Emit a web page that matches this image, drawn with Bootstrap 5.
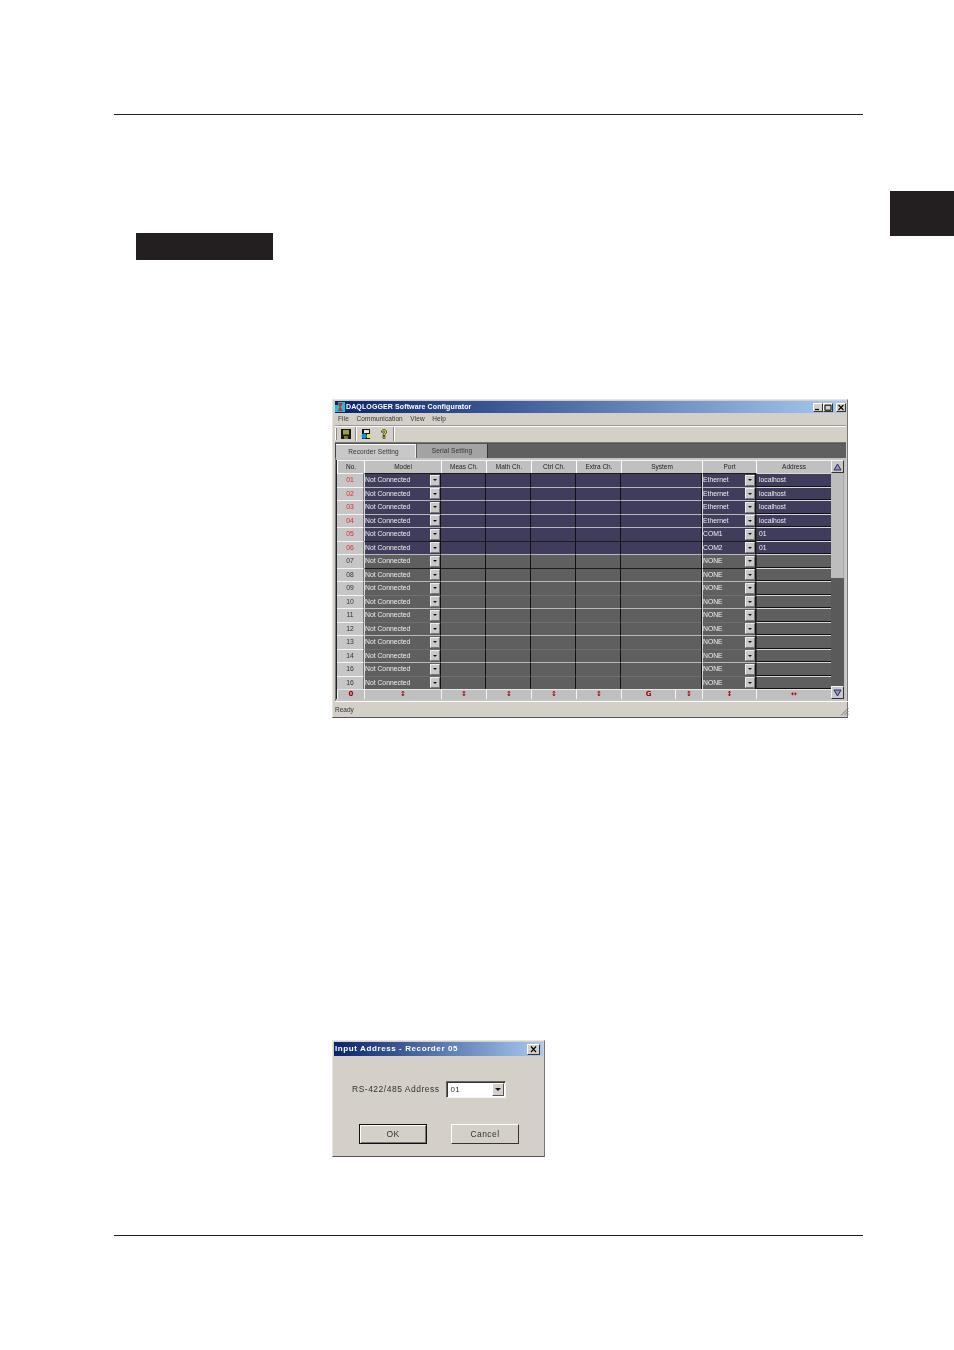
<!DOCTYPE html>
<html lang="en">
<head>
<meta charset="utf-8">
<title>DAQLOGGER Software Configurator</title>
<link href="https://cdn.jsdelivr.net/npm/bootstrap@5.3.0/dist/css/bootstrap.min.css" rel="stylesheet">
<style>
html,body{background:#fff;margin:0;height:1350px;overflow:hidden}
.sheet{font-family:"Liberation Sans",Arial,sans-serif;width:954px}
.rule{height:1px;background:#231f20;width:749px;margin-left:114px}
.rule-top{margin-top:114px}
.rule-bottom{margin-top:78px}
.heading-band{margin-top:76px;height:69px}
.heading-block{width:137px;height:27px;margin-left:136px;margin-top:42px;background:#231f20}
.chapter-tab{width:64px;height:45px;background:#231f20}
.winframe{background:#d4d0c8;border:1px solid;border-color:#e8e6e0 #777 #555 #e8e6e0;color:#222;filter:blur(.4px);font-size:6.8px}
.app-win{width:516px;height:319px;margin:139px 0 0 332px;padding:1px 1px 0 2px}
.titlebar{height:12px;background:linear-gradient(90deg,#0a246a,#a6caf0);color:#fff;font-weight:700;font-size:7px;letter-spacing:.12px;padding:0}
.app-ico{width:10px;height:10px;margin-right:1px;flex:none}
.capbtn{width:10px;height:9px;background:#d4d0c8;border:1px solid;border-color:#fff #333 #333 #fff;display:block;flex:none}
.capbtn svg{display:block;width:8px;height:7px}
.cap-x{margin-left:3px}
.menubar{height:12px;padding-left:3px;line-height:12px;color:#333;font-size:6.5px;letter-spacing:.1px}
.menubar span{margin-right:7.5px}
.toolbar{height:18px;border-top:1px solid #9a9890;border-bottom:1px solid #77756f;box-shadow:inset 0 1px #fff;padding-left:0}
.tb-grip{width:2px;height:12px;border-left:1px solid #fff;border-right:1px solid #888}
.tb-ico{width:10px;height:10px;flex:none}
.tb-sep{width:2px;height:14px;border-left:1px solid #888;border-right:1px solid #fff}
.tabstrip{height:15px;background:#5f5f5f;width:511px;border-left:1px solid #444;border-top:1px solid #555}
.tabitem{height:14px;line-height:14px;text-align:center;color:#333;font-size:6.5px;letter-spacing:.12px}
.tab-on{width:80px;background:#c8c8c8;border-top:1px solid #fff;border-right:1px solid #eee;margin-right:1px;padding-right:4px}
.tab-off{width:71px;background:#a3a3a3;border-right:1px solid #333}
.panelbody{width:511px;background:#c4c4c4;padding:2px 2px 2px 1px;border-left:1px solid #777}
.gridbox{width:494px;flex:none;box-shadow:-1px 0 #222}
.cfg-row,.cfg-head{display:grid;grid-template-columns:27px 77px 45px 45px 45px 45px 81px 54px 75px}
.cfg-head{height:13px;background:#c0c0c0;color:#222;text-align:center;line-height:12px;font-size:6.5px}
.cfg-head span{border-left:1px solid #fff;border-top:1px solid #f2f2f2;border-bottom:1px solid #777}
.cfg-row{height:13.53px;line-height:12.5px;color:#eee}
.cfg-row>span{overflow:hidden;white-space:nowrap;border-top:1px solid}
.blue>span{background:#3f3c5c}
.grey>span{background:#5f5f5f}
.lw>span{border-top-color:#b9b9b9}
.ld>span{border-top-color:#1c1c1c}
.lf>span{border-top-color:#6e6e6e}
.cfg-row>.c-no{background:#c6c6c6;color:#333;text-align:center;border-top-color:#f4f4f4;border-right:1px solid #777}
.blue>.c-no{color:#e2282c}
.c-cb{display:flex;align-items:center;border-left:1px solid #ddd;border-right:1px solid #111;padding-left:0}
.c-dat{border-right:1px solid #111}
.cfg-row>.c-addr{border-left:1px solid #333;border-top-color:#d8d8d8;border-bottom:1px solid #111;padding-left:2px;line-height:11px}
.dropbtn{width:10px;height:11px;margin-left:auto;margin-right:0;background:#c8c8c8;border:1px solid;border-color:#eee #777 #777 #eee;display:flex;align-items:center;justify-content:center;flex:none}
.dropbtn::after{content:"";border:2px solid transparent;border-top:2px solid #111;border-bottom:0}
.cfg-foot{display:grid;grid-template-columns:27px 77px 45px 45px 45px 45px 54px 27px 54px 75px;height:10px;background:#bfbfbf;color:#a00000;text-align:center;line-height:8px;font-size:7px;font-weight:700;font-family:"DejaVu Sans",sans-serif}
.cfg-foot span{border-left:1px solid #f4f4f4;border-top:1px solid #e6e6e6;overflow:hidden}
.scrollcol{width:13px;flex:none}
.scrollbtn{height:13px;background:#c8c8c8;border:1px solid;border-color:#f4f4f4 #333 #333 #f4f4f4}
.scrollbtn svg{width:9px;height:8px;display:block}
.scrolllight{height:105px;background:#bdbdbd;border-right:1px solid #aaa}
.scrolldark{background:#5a5a5a}
.statusbar{height:16px;line-height:15px;border-top:1px solid #fff;color:#333;padding:0 0 0 0;font-size:6.5px;width:514px}
.resizer{width:9px;height:9px;margin-top:5px}
.dlg-win{width:213px;height:117px;margin:322px 0 0 332px;padding:1px 1px 0 1px;color:#333;font-size:8px}
.dlg-title{height:14px;background:linear-gradient(90deg,#0a246a,#a6caf0);color:#fff;font-weight:700;font-size:8px;letter-spacing:.6px;padding:0 3px 0 1px}
.dlg-close{width:13px;height:11px;background:#d4d0c8;border:1px solid;border-color:#fff #333 #333 #fff;display:block;flex:none}
.dlg-close svg{display:block;width:11px;height:9px}
.dlg-field{margin:25px 0 0 18px;letter-spacing:.5px;font-size:8.5px}
.dlg-combo{width:60px;height:17px;margin-left:7px;background:#fff;border:1px solid;border-color:#666 #f4f4f4 #f4f4f4 #666;box-shadow:inset 1px 1px #333;padding-left:3px;letter-spacing:.4px;font-size:8px}
.dlg-drop{width:12px;height:13px;margin-left:auto;margin-right:1px;background:#d4d0c8;border:1px solid;border-color:#fff #555 #555 #fff;display:flex;align-items:center;justify-content:center}
.dlg-drop::after{content:"";border:3px solid transparent;border-top:3px solid #111;border-bottom:0}
.dlg-actions{margin:26px 0 0 25px;gap:24px}
.dlg-actions .btn{width:68px;height:20px;padding:0;border-radius:0;background:#d4d0c8;color:#333;font-size:8.5px;line-height:16px;letter-spacing:.4px;border:1px solid;border-color:#fff #333 #333 #fff}
.dlg-actions .btn.dlg-default{border:1px solid #111;box-shadow:inset 1px 1px #fff,inset -1px -1px #777}
</style>
</head>
<body>
<div class="sheet">
  <div class="rule rule-top"></div>
  <div class="heading-band d-flex align-items-start justify-content-between">
    <div class="heading-block"></div>
    <div class="chapter-tab"></div>
  </div>

  <div class="winframe app-win">
    <div class="titlebar d-flex align-items-center">
      <svg class="app-ico" viewBox="0 0 10 10"><rect width="10" height="10" fill="#19c4d0"/><path d="M3 1h5L5.500 5 8 9H3l1.500-4z" fill="#e0202c"/><path d="M0 0h3v3H0z" fill="#0a246a"/></svg>
      <span>DAQLOGGER Software Configurator</span>
      <span class="capbtn ms-auto"><svg viewBox="0 0 8 7"><path d="M1 5.500h4" stroke="#000" stroke-width="1.200"/></svg></span>
      <span class="capbtn"><svg viewBox="0 0 8 7"><path d="M1 1.200h6v5H1z" fill="none" stroke="#000" stroke-width="1"/></svg></span>
      <span class="capbtn cap-x"><svg viewBox="0 0 8 7"><path d="M1.500 1l5 5m0-5l-5 5" stroke="#000" stroke-width="1.100"/></svg></span>
    </div>
    <div class="menubar d-flex"><span>File</span><span>Communication</span><span>View</span><span>Help</span></div>
    <div class="toolbar d-flex align-items-center">
      <span class="tb-grip me-1"></span>
      <svg class="tb-ico" viewBox="0 0 10 10"><rect width="10" height="10" fill="#1a1a10"/><rect x="2" y="1" width="6" height="4.500" fill="#a39a4c"/><rect x="3" y="7" width="4" height="3" fill="#77734a"/></svg>
      <span class="tb-sep mx-1"></span>
      <svg class="tb-ico" viewBox="0 0 10 10"><rect x="1" width="8" height="10" fill="#111"/><rect x="3" y="1" width="5" height="3" fill="#e8e8e8"/><circle cx="3.200" cy="7" r="2.600" fill="#1d8fe0"/><rect x="6" y="5" width="3" height="4" fill="#d8e840"/></svg>
      <svg class="tb-ico ms-2" viewBox="0 0 10 10"><path d="M2.500 3.200C2.500 1.400 3.700.5 5 .5s2.600.9 2.600 2.600c0 1.500-1.500 1.800-1.600 3.400H4c0-2.300 1.600-2.500 1.600-3.400 0-.4-.2-.7-.6-.7s-.6.3-.6.8z" fill="#e4d020" stroke="#222" stroke-width=".7"/><rect x="4" y="7.500" width="2" height="2" fill="#e4d020" stroke="#222" stroke-width=".6"/></svg>
      <span class="tb-sep ms-1"></span>
    </div>
    <div class="tabstrip d-flex">
      <div class="tabitem tab-on">Recorder Setting</div>
      <div class="tabitem tab-off">Serial Setting</div>
    </div>
    <div class="panelbody d-flex">
      <div class="gridbox">
        <div class="cfg-head"><span>No.</span><span>Model</span><span>Meas Ch.</span><span>Math Ch.</span><span>Ctrl Ch.</span><span>Extra Ch.</span><span>System</span><span>Port</span><span>Address</span></div>
        <div class="cfg-row blue ld"><span class="c-no">01</span><span class="c-cb">Not Connected<i class="dropbtn"></i></span><span class="c-dat"></span><span class="c-dat"></span><span class="c-dat"></span><span class="c-dat"></span><span class="c-dat"></span><span class="c-cb">Ethernet<i class="dropbtn"></i></span><span class="c-addr">localhost</span></div>
        <div class="cfg-row blue lw"><span class="c-no">02</span><span class="c-cb">Not Connected<i class="dropbtn"></i></span><span class="c-dat"></span><span class="c-dat"></span><span class="c-dat"></span><span class="c-dat"></span><span class="c-dat"></span><span class="c-cb">Ethernet<i class="dropbtn"></i></span><span class="c-addr">localhost</span></div>
        <div class="cfg-row blue lw"><span class="c-no">03</span><span class="c-cb">Not Connected<i class="dropbtn"></i></span><span class="c-dat"></span><span class="c-dat"></span><span class="c-dat"></span><span class="c-dat"></span><span class="c-dat"></span><span class="c-cb">Ethernet<i class="dropbtn"></i></span><span class="c-addr">localhost</span></div>
        <div class="cfg-row blue lw"><span class="c-no">04</span><span class="c-cb">Not Connected<i class="dropbtn"></i></span><span class="c-dat"></span><span class="c-dat"></span><span class="c-dat"></span><span class="c-dat"></span><span class="c-dat"></span><span class="c-cb">Ethernet<i class="dropbtn"></i></span><span class="c-addr">localhost</span></div>
        <div class="cfg-row blue lw"><span class="c-no">05</span><span class="c-cb">Not Connected<i class="dropbtn"></i></span><span class="c-dat"></span><span class="c-dat"></span><span class="c-dat"></span><span class="c-dat"></span><span class="c-dat"></span><span class="c-cb">COM1<i class="dropbtn"></i></span><span class="c-addr">01</span></div>
        <div class="cfg-row blue ld"><span class="c-no">06</span><span class="c-cb">Not Connected<i class="dropbtn"></i></span><span class="c-dat"></span><span class="c-dat"></span><span class="c-dat"></span><span class="c-dat"></span><span class="c-dat"></span><span class="c-cb">COM2<i class="dropbtn"></i></span><span class="c-addr">01</span></div>
        <div class="cfg-row grey lw"><span class="c-no">07</span><span class="c-cb">Not Connected<i class="dropbtn"></i></span><span class="c-dat"></span><span class="c-dat"></span><span class="c-dat"></span><span class="c-dat"></span><span class="c-dat"></span><span class="c-cb">NONE<i class="dropbtn"></i></span><span class="c-addr"></span></div>
        <div class="cfg-row grey ld"><span class="c-no">08</span><span class="c-cb">Not Connected<i class="dropbtn"></i></span><span class="c-dat"></span><span class="c-dat"></span><span class="c-dat"></span><span class="c-dat"></span><span class="c-dat"></span><span class="c-cb">NONE<i class="dropbtn"></i></span><span class="c-addr"></span></div>
        <div class="cfg-row grey lw"><span class="c-no">09</span><span class="c-cb">Not Connected<i class="dropbtn"></i></span><span class="c-dat"></span><span class="c-dat"></span><span class="c-dat"></span><span class="c-dat"></span><span class="c-dat"></span><span class="c-cb">NONE<i class="dropbtn"></i></span><span class="c-addr"></span></div>
        <div class="cfg-row grey lf"><span class="c-no">10</span><span class="c-cb">Not Connected<i class="dropbtn"></i></span><span class="c-dat"></span><span class="c-dat"></span><span class="c-dat"></span><span class="c-dat"></span><span class="c-dat"></span><span class="c-cb">NONE<i class="dropbtn"></i></span><span class="c-addr"></span></div>
        <div class="cfg-row grey lw"><span class="c-no">11</span><span class="c-cb">Not Connected<i class="dropbtn"></i></span><span class="c-dat"></span><span class="c-dat"></span><span class="c-dat"></span><span class="c-dat"></span><span class="c-dat"></span><span class="c-cb">NONE<i class="dropbtn"></i></span><span class="c-addr"></span></div>
        <div class="cfg-row grey lf"><span class="c-no">12</span><span class="c-cb">Not Connected<i class="dropbtn"></i></span><span class="c-dat"></span><span class="c-dat"></span><span class="c-dat"></span><span class="c-dat"></span><span class="c-dat"></span><span class="c-cb">NONE<i class="dropbtn"></i></span><span class="c-addr"></span></div>
        <div class="cfg-row grey lw"><span class="c-no">13</span><span class="c-cb">Not Connected<i class="dropbtn"></i></span><span class="c-dat"></span><span class="c-dat"></span><span class="c-dat"></span><span class="c-dat"></span><span class="c-dat"></span><span class="c-cb">NONE<i class="dropbtn"></i></span><span class="c-addr"></span></div>
        <div class="cfg-row grey lf"><span class="c-no">14</span><span class="c-cb">Not Connected<i class="dropbtn"></i></span><span class="c-dat"></span><span class="c-dat"></span><span class="c-dat"></span><span class="c-dat"></span><span class="c-dat"></span><span class="c-cb">NONE<i class="dropbtn"></i></span><span class="c-addr"></span></div>
        <div class="cfg-row grey lw"><span class="c-no">16</span><span class="c-cb">Not Connected<i class="dropbtn"></i></span><span class="c-dat"></span><span class="c-dat"></span><span class="c-dat"></span><span class="c-dat"></span><span class="c-dat"></span><span class="c-cb">NONE<i class="dropbtn"></i></span><span class="c-addr"></span></div>
        <div class="cfg-row grey lf"><span class="c-no">16</span><span class="c-cb">Not Connected<i class="dropbtn"></i></span><span class="c-dat"></span><span class="c-dat"></span><span class="c-dat"></span><span class="c-dat"></span><span class="c-dat"></span><span class="c-cb">NONE<i class="dropbtn"></i></span><span class="c-addr"></span></div>
        <div class="cfg-foot"><span>0</span><span>↕</span><span>↕</span><span>↕</span><span>↕</span><span>↕</span><span>G</span><span>↕</span><span>↕</span><span>↔</span></div>
      </div>
      <div class="scrollcol d-flex flex-column">
        <div class="scrollbtn d-flex align-items-center justify-content-center"><svg viewBox="0 0 9 8"><path d="M4.500 1L8 7H1z" fill="#8f90c8" stroke="#2c2c58"/></svg></div>
        <div class="scrolllight"></div>
        <div class="scrolldark flex-grow-1"></div>
        <div class="scrollbtn d-flex align-items-center justify-content-center"><svg viewBox="0 0 9 8"><path d="M4.500 7L8 1H1z" fill="#8f90c8" stroke="#2c2c58"/></svg></div>
      </div>
    </div>
    <div class="statusbar d-flex justify-content-between">
      <span>Ready</span>
      <svg class="resizer" viewBox="0 0 9 9"><path d="M8.500 1L1 8.500M8.500 4L4 8.500M8.500 7L7 8.500" stroke="#777" fill="none"/></svg>
    </div>
  </div>

  <div class="winframe dlg-win">
    <div class="dlg-title d-flex align-items-center justify-content-between">
      <span>Input Address - Recorder 05</span>
      <span class="dlg-close"><svg viewBox="0 0 11 9"><path d="M3 1.500l5 5.500m0-5.500L3 7" stroke="#000" stroke-width="1.200"/></svg></span>
    </div>
    <div class="dlg-field d-flex align-items-center">
      <span>RS-422/485 Address</span>
      <div class="dlg-combo d-flex align-items-center"><span>01</span><i class="dlg-drop"></i></div>
    </div>
    <div class="dlg-actions d-flex">
      <button type="button" class="btn dlg-default">OK</button>
      <button type="button" class="btn">Cancel</button>
    </div>
  </div>

  <div class="rule rule-bottom"></div>
</div>
<script src="https://cdn.jsdelivr.net/npm/bootstrap@5.3.0/dist/js/bootstrap.bundle.min.js"></script>
</body>
</html>
